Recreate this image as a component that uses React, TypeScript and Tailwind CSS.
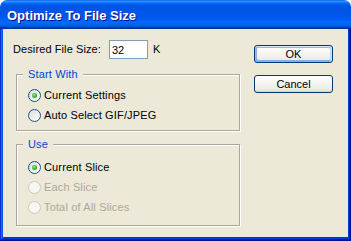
import React from "react";

function Radio({ label, checked, disabled }: { label: string; checked?: boolean; disabled?: boolean }) {
  return (
    <div className="flex items-center h-[20px] gap-[3px]">
      {disabled ? (
        <span className="w-[13px] h-[13px] rounded-full border border-[#cac8bb] bg-[#f7f7f4]" />
      ) : (
        <span className="w-[13px] h-[13px] rounded-full border border-[#1d5281] bg-[linear-gradient(135deg,#dcdcd7,#ffffff)] flex items-center justify-center">
          {checked && <span className="w-[5px] h-[5px] rounded-full bg-[radial-gradient(circle_at_40%_40%,#8ee88a,#21a121_70%,#1a8a18)]" />}
        </span>
      )}
      <span className={disabled ? "text-[#aca899] tracking-[0.15px]" : "tracking-[0.15px]"}>{label}</span>
    </div>
  );
}

function Group({ label, className, children }: { label: string; className: string; children: React.ReactNode }) {
  return (
    <div className={"relative ml-[3px] w-[224px] border border-[#aca899] shadow-[1px_1px_0_#ffffff,inset_1px_1px_0_#ffffff] pl-[11px] " + className}>
      <span className="absolute left-[6px] -top-[7px] px-[5px] bg-[#ece9d8] text-[#0046d5] leading-[13px] tracking-[0.15px]">{label}</span>
      {children}
    </div>
  );
}

export default function App() {
  return (
    <div className="w-[351px] h-[241px] flex flex-col bg-white font-['Liberation_Sans',Arial,sans-serif] text-[11px] leading-[13px] text-black select-none">
      <div className="h-[29px] shrink-0 rounded-t-[7px] bg-[linear-gradient(180deg,#0058ee_0%,#3593ff_4%,#288eff_6%,#127dff_8%,#036ffc_10%,#0262ee_14%,#0057e5_20%,#0054e3_24%,#0055eb_56%,#005bf5_66%,#026afe_76%,#0062ef_86%,#0052d6_92%,#0040ab_94%,#003092_100%)] pl-[7px] pt-[8px] text-[13px] leading-[15px]">
        <span className="text-white font-bold [text-shadow:1px_1px_#0f1089]">Optimize To File Size</span>
      </div>
      <div className="flex-1 flex bg-[#0831d9] px-[3px] pb-[4px] shadow-[inset_-1px_-1px_#00138c,inset_1px_0_#0831d9,inset_-2px_-2px_#001ea0,inset_2px_0_#166aee,inset_-3px_-3px_#003bda,inset_3px_0_#0855dd]">
        <div className="flex-1 flex bg-[#ece9d8]">
          <div className="w-[237px] shrink-0 pl-[10px] pt-[11px]">
            <div className="flex items-center h-[19px]">
              <span className="w-[96px] tracking-[0.1px]">Desired File Size:</span>
              <input
                readOnly
                value="32"
                className="w-[39px] h-[19px] border border-[#7f9db9] bg-white px-[2px] outline-none text-[11px] leading-[13px]"
              />
              <span className="ml-[5px]">K</span>
            </div>
            <Group label="Start With" className="mt-[15px] pt-[10px] pb-[5px]">
              <Radio label="Current Settings" checked />
              <Radio label="Auto Select GIF/JPEG" />
            </Group>
            <Group label="Use" className="mt-[13px] pt-[12px] pb-[8px]">
              <Radio label="Current Slice" checked />
              <Radio label="Each Slice" disabled />
              <Radio label="Total of All Slices" disabled />
            </Group>
          </div>
          <div className="flex flex-col ml-[14px] pt-[16px] gap-[12px]">
            <button className="w-[79px] h-[18px] rounded-[3px] border border-[#003c74] bg-[linear-gradient(180deg,#ffffff,#ecebe6_86%,#d6d0c5)] shadow-[inset_-1px_1px_#cee7ff,inset_1px_2px_#98b8ea,inset_-2px_2px_#bcd4f6,inset_1px_-1px_#89ade4,inset_2px_-2px_#89ade4] text-[11px] leading-[13px]">
              OK
            </button>
            <button className="w-[79px] h-[18px] rounded-[3px] border border-[#003c74] bg-[linear-gradient(180deg,#ffffff,#ecebe6_86%,#d6d0c5)] text-[11px] leading-[13px]">
              Cancel
            </button>
          </div>
        </div>
      </div>
    </div>
  );
}
